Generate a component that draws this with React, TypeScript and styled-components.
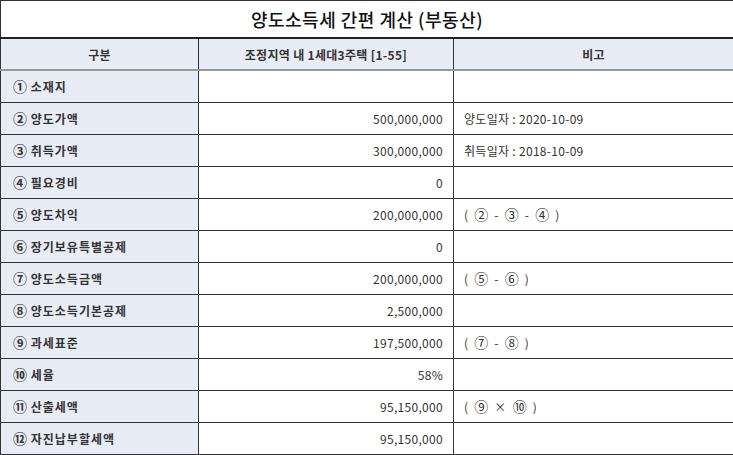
import React from 'react';
import styled, { createGlobalStyle } from 'styled-components';

const GlobalStyle = createGlobalStyle`
    body {
        margin: 0;
        background: #ffffff;
        font-family: "Noto Sans CJK KR", "Liberation Sans", sans-serif;
    }
`;

interface IRow {
    label: string;
    amount: string;
    note: string;
}

const rows: IRow[] = [
    { label: '① 소재지', amount: '', note: '' },
    { label: '② 양도가액', amount: '500,000,000', note: '양도일자 : 2020-10-09' },
    { label: '③ 취득가액', amount: '300,000,000', note: '취득일자 : 2018-10-09' },
    { label: '④ 필요경비', amount: '0', note: '' },
    { label: '⑤ 양도차익', amount: '200,000,000', note: '( ② - ③ - ④ )' },
    { label: '⑥ 장기보유특별공제', amount: '0', note: '' },
    { label: '⑦ 양도소득금액', amount: '200,000,000', note: '( ⑤ - ⑥ )' },
    { label: '⑧ 양도소득기본공제', amount: '2,500,000', note: '' },
    { label: '⑨ 과세표준', amount: '197,500,000', note: '( ⑦ - ⑧ )' },
    { label: '⑩ 세율', amount: '58%', note: '' },
    { label: '⑪ 산출세액', amount: '95,150,000', note: '( ⑨ × ⑩ )' },
    { label: '⑫ 자진납부할세액', amount: '95,150,000', note: '' },
];

const Table = styled.table`
    width: 733px;
    border-collapse: collapse;
    table-layout: fixed;
    font-size: 12px;
    color: #222;
`;

const TitleCell = styled.th`
    height: 36px;
    padding: 0;
    border: 1px solid #333;
    border-bottom: 2px solid #222;
    font-size: 18px;
    font-weight: 500;
    letter-spacing: 0.5px;
    color: #111;
    text-align: center;
    background: #fff;
`;

const HeadCell = styled.th`
    height: 30px;
    padding: 0;
    border: 1px solid #333;
    border-top: none;
    border-bottom: 2px solid #999;
    background: #e8ecf4;
    font-weight: 700;
    letter-spacing: 0.3px;
    color: #333;
    text-align: center;
`;

const LabelCell = styled.td`
    height: 31px;
    padding: 0 0 0 12px;
    border: 1px solid #333;
    background: #e8ecf4;
    font-weight: 700;
    letter-spacing: 1px;
    color: #333;
    white-space: nowrap;
`;

const ValueCell = styled.td<{ $align?: 'left' | 'right' }>`
    height: 31px;
    padding: 0 10px;
    border: 1px solid #333;
    background: #fff;
    color: #333;
    letter-spacing: 0.3px;
    text-align: ${p => p.$align || 'left'};
    white-space: nowrap;
`;

// circled numbers are full width in the original
const Circled = styled.span<{ $gap?: number }>`
    display: inline-block;
    width: 14px;
    margin: 0 ${p => p.$gap || 0}px;
    font-size: 14px;
    line-height: 1;
    text-align: center;
`;

const withCircles = (text: string, gap = 0) =>
    text.split(/([①-⑫])/).map((part, i) =>
        /[①-⑫]/.test(part) ? <Circled key={i} $gap={gap}>{part}</Circled> : part
    );

const App: React.FC = () => {
    return (
        <>
            <GlobalStyle />
            <Table>
                <colgroup>
                    <col style={{ width: 198 }} />
                    <col style={{ width: 255 }} />
                    <col style={{ width: 280 }} />
                </colgroup>
                <thead>
                    <tr>
                        <TitleCell colSpan={3}>양도소득세 간편 계산 (부동산)</TitleCell>
                    </tr>
                    <tr>
                        <HeadCell>구분</HeadCell>
                        <HeadCell>조정지역 내 1세대3주택 [1-55]</HeadCell>
                        <HeadCell>비고</HeadCell>
                    </tr>
                </thead>
                <tbody>
                    {rows.map(row => (
                        <tr key={row.label}>
                            <LabelCell>{withCircles(row.label)}</LabelCell>
                            <ValueCell $align="right">{row.amount}</ValueCell>
                            <ValueCell>{withCircles(row.note, 3)}</ValueCell>
                        </tr>
                    ))}
                </tbody>
            </Table>
        </>
    );
};

export default App;
